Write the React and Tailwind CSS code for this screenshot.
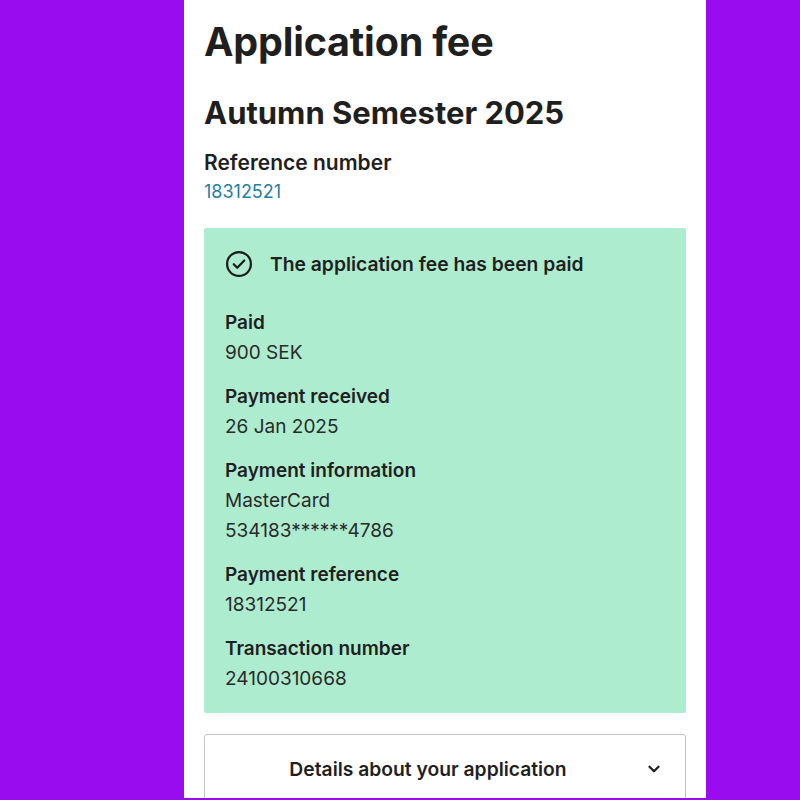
import React from 'react';

const rows = [
    { label: 'Paid', values: ['900 SEK'] },
    { label: 'Payment received', values: ['26 Jan 2025'] },
    { label: 'Payment information', values: ['MasterCard', '534183******4786'] },
    { label: 'Payment reference', values: ['18312521'] },
    { label: 'Transaction number', values: ['24100310668'] },
];

function CheckCircle() {
    return (
        <svg width="28" height="28" viewBox="0 0 24 24" fill="none" stroke="#1b1b1b" strokeWidth="1.9" strokeLinecap="round" strokeLinejoin="round">
            <circle cx="12" cy="12" r="10.2" />
            <path d="M7.5 12.2l3 3 6-6.2" />
        </svg>
    );
}

function App() {
    return (
        <div className="w-[800px] h-[800px] bg-[#9a0cf0] overflow-hidden" style={{ fontFamily: 'Inter, "Liberation Sans", sans-serif' }}>
            <div className="ml-[184px] w-[522px] h-[798px] bg-white px-[20px] pt-[18px] text-[#1f1f1f] overflow-hidden">
                <h1 className="text-[39.5px] leading-[48px] font-bold tracking-[-0.2px]">Application fee</h1>
                <h2 className="mt-[28px] text-[31px] leading-[38px] font-bold">Autumn Semester 2025</h2>
                <div className="mt-[17px] text-[21px] leading-[28px] font-semibold">Reference number</div>
                <div className="text-[18px] leading-[30px] text-[#1f7fa3]">18312521</div>

                <div className="mt-[21px] bg-[#aeecd0] rounded-[2px] px-[21px] pt-[22px] pb-[19px]">
                    <div className="flex items-center gap-[17px]">
                        <CheckCircle />
                        <span className="text-[19.3px] font-semibold">The application fee has been paid</span>
                    </div>
                    <div className="mt-[29px] flex flex-col gap-[14px]">
                        {rows.map((row) => (
                            <div key={row.label} className="text-[19px] leading-[30px]">
                                <div className="font-semibold">{row.label}</div>
                                {row.values.map((v) => (
                                    <div key={v} className="text-[#2a2a2a]">{v}</div>
                                ))}
                            </div>
                        ))}
                    </div>
                </div>

                <div className="mt-[21px] h-[80px] border border-[#c4c4c4] rounded-[3px] flex items-start pt-[20px] px-[24px]">
                    <span className="flex-1 text-center text-[19.3px] font-semibold pr-[18px]">Details about your application</span>
                    <svg width="18" height="18" viewBox="0 0 24 24" fill="none" stroke="#1f1f1f" strokeWidth="3" strokeLinecap="round" strokeLinejoin="round" className="mt-[5px] mr-[-2px]">
                        <path d="M6 9l6 6 6-6" />
                    </svg>
                </div>
            </div>
        </div>
    );
}

export default App;
